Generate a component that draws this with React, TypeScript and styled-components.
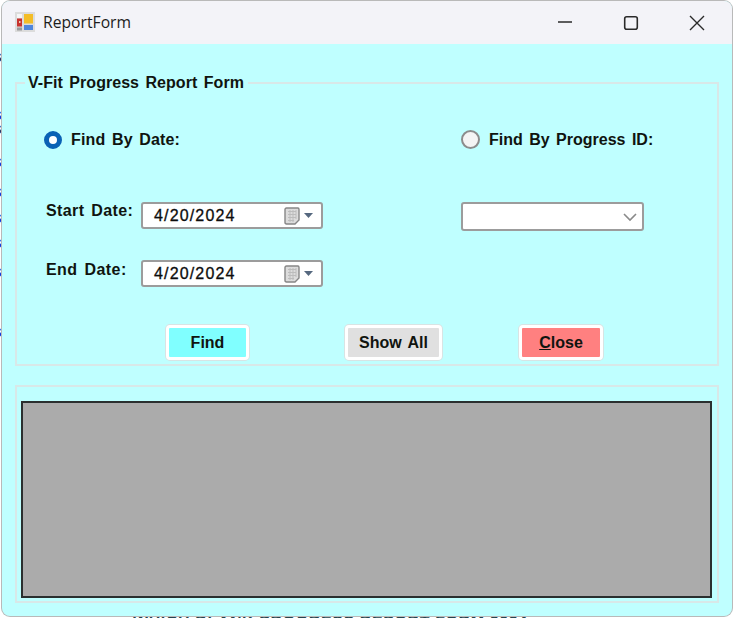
import React from "react";
import styled, { createGlobalStyle } from "styled-components";

const Global = createGlobalStyle`
  html, body { margin: 0; padding: 0; background: #fff; }
  body { font-family: "Liberation Sans", Arial, sans-serif; }
  * { box-sizing: border-box; }
`;

const Desktop = styled.div`
  position: relative;
  width: 733px;
  height: 618px;
  overflow: hidden;
  padding: 1px 1px 0 2px;
  background: #fff;
`;

const PeekText = styled.div`
  position: absolute;
  left: 133px;
  top: 614px;
  font-size: 16px;
  font-weight: 700;
  letter-spacing: 0.6px;
  color: #26434d;
  white-space: nowrap;
`;

const EdgeLetter = styled.span<{ $top: number; $blue?: boolean }>`
  position: absolute;
  left: -7px;
  top: ${(p) => p.$top}px;
  font-size: 13px;
  font-weight: 700;
  color: ${(p) => (p.$blue ? "#1a2fd0" : "#333")};
`;

const Window = styled.div`
  position: relative;
  height: 615px;
  display: flex;
  flex-direction: column;
  border-radius: 8px;
  overflow: hidden;
  background: #bfffff;
  box-shadow: 0 0 0 1px #b9b9b9;
`;

const TitleBar = styled.div`
  height: 43px;
  flex: none;
  display: flex;
  align-items: center;
  padding-left: 13px;
  background: #f3f3f8;
`;

const IconSlot = styled.span`
  display: flex;
  margin-top: -2px;
`;

const TitleText = styled.span`
  margin: -2px 0 0 8px;
  font: 400 15.7px "Open Sans", "Liberation Sans", sans-serif;
  color: #1c1c1c;
`;

const WindowControls = styled.div`
  margin-left: auto;
  display: flex;
  align-items: center;
  gap: 50px;
  padding-right: 27px;
  color: #2a2a2a;
`;

const Client = styled.div`
  flex: 1;
  display: flex;
  flex-direction: column;
  padding: 38px 13px 0 13px;
`;

const Group = styled.div`
  position: relative;
  flex: none;
  border: 2px solid #d8e8e8;
`;

const FormGroup = styled(Group)`
  height: 284px;
  padding: 0 27px;
`;

const GridGroup = styled(Group)`
  margin-top: 19px;
  height: 218px;
  padding: 14px 5px 0 4px;
`;

const Legend = styled.span`
  position: absolute;
  left: 8px;
  top: -10px;
  padding: 0 4px 0 3px;
  background: #bfffff;
`;

const Label = styled.span<{ $spacing?: number }>`
  font-size: 16px;
  font-weight: 700;
  letter-spacing: ${(p) => p.$spacing ?? 0}px;
  word-spacing: 2px;
  color: #10140f;
  white-space: nowrap;
`;

const Columns = styled.div`
  display: grid;
  grid-template-columns: 417px 1fr;
`;

const RadioRow = styled(Columns)`
  padding-top: 46px;
  height: 92px;
`;

const RadioOption = styled.div`
  display: flex;
  align-items: center;
  height: 19px;
  gap: 9px;
`;

const RadioMark = styled.span<{ $checked?: boolean }>`
  width: ${(p) => (p.$checked ? 18 : 19)}px;
  height: ${(p) => (p.$checked ? 18 : 19)}px;
  flex: none;
  border-radius: 50%;
  background: ${(p) => (p.$checked ? "#fff" : "#f4f4f4")};
  border: ${(p) => (p.$checked ? "5px solid #0a62b5" : "2px solid #8c8c8c")};
`;

const DateArea = styled(Columns)`
  padding-top: 26px;
`;

const DateColumn = styled.div`
  display: flex;
  flex-direction: column;
  gap: 31px;
`;

const DateRow = styled.div`
  display: flex;
  align-items: flex-start;
`;

const DateLabel = styled.div<{ $dy: number }>`
  width: 95px;
  margin-left: 2px;
  margin-top: ${(p) => p.$dy}px;
  margin-bottom: ${(p) => -p.$dy}px;
  line-height: 18px;
`;

const Field = styled.div`
  width: 182px;
  height: 27px;
  display: flex;
  align-items: center;
  background: #fff;
  border: 2px solid #9c9c9c;
  border-radius: 3px;
`;

const DateField = styled(Field)`
  padding: 0 8px 0 11px;
  justify-content: space-between;
`;

const ComboField = styled(Field)`
  width: 183px;
  height: 29px;
  justify-content: flex-end;
  padding-right: 4px;
`;

const DateValue = styled.span`
  font-size: 16px;
  font-weight: 400;
  letter-spacing: 1.15px;
  color: #0c0c0c;
  -webkit-text-stroke: 0.3px #0c0c0c;
`;

const CalendarGroup = styled.span`
  display: inline-flex;
  align-items: center;
  gap: 4px;
`;

const ButtonRow = styled.div`
  position: absolute;
  left: 149px;
  top: 241px;
  display: flex;
`;

const ActionButton = styled.button<{ $bg: string; $w: number; $ml: number }>`
  width: ${(p) => p.$w}px;
  margin-left: ${(p) => p.$ml}px;
  height: 35px;
  padding: 0;
  background: ${(p) => p.$bg};
  border: 3px solid #fff;
  border-radius: 4px;
  box-shadow: 0 0 0 1px #d8e4e4;
  font: 700 16px "Liberation Sans", sans-serif;
  word-spacing: 2px;
  color: #10140f;
`;

const Underlined = styled.span`
  text-decoration: underline;
`;

const DataGrid = styled.div`
  height: 197px;
  background: #ababab;
  border: 2px solid #2a2f2f;
`;

function AppIcon() {
  return (
    <svg width="20" height="20" viewBox="0 0 20 20">
      <rect x="0" y="0" width="20" height="20" fill="#dcdcdc" />
      <rect x="2" y="2" width="5" height="4" fill="#f6f6f6" />
      <rect x="2" y="6.5" width="5" height="8" fill="#c8322e" />
      <rect x="4" y="9" width="1.5" height="2" fill="#f0c9b0" />
      <rect x="2" y="15.5" width="5" height="3" fill="#9a9a9a" />
      <rect x="9" y="2" width="9" height="9.5" fill="#f3bd27" />
      <rect x="9" y="13" width="9" height="5" fill="#4f86dc" />
    </svg>
  );
}

function CalendarIcon() {
  return (
    <CalendarGroup>
      <svg width="16" height="18" viewBox="0 0 16 18">
        <path d="M1 2.5 Q1 1 2.5 1 H14 Q15 1 15 2.5 V13 L11 17 H2.5 Q1 17 1 15.5 Z" fill="#dcdcdc" stroke="#868686" strokeWidth="1.4" />
        <path d="M4 4.5H12M4 7.5H12M4 10.5H12M4 13.5H10M6 3V15M9 3V15M12 3V12" stroke="#bcbcbc" strokeWidth="1" />
      </svg>
      <svg width="9" height="5" viewBox="0 0 9 5">
        <path d="M0 0H9L4.5 5Z" fill="#56687f" />
      </svg>
    </CalendarGroup>
  );
}

function DatePicker() {
  return (
    <DateField>
      <DateValue>4/20/2024</DateValue>
      <CalendarIcon />
    </DateField>
  );
}

const edgeLetters = [
  { top: 50 }, { top: 108, blue: true }, { top: 122 }, { top: 155, blue: true },
  { top: 185, blue: true }, { top: 211, blue: true }, { top: 236, blue: true },
  { top: 265, blue: true }, { top: 325, blue: true },
];

export default function App() {
  return (
    <>
      <Global />
      <Desktop>
        <PeekText>WHICH BLANK PROGRESS REPORT FORM 2024</PeekText>
        {edgeLetters.map((e) => (
          <EdgeLetter key={e.top} $top={e.top} $blue={e.blue}>S</EdgeLetter>
        ))}
        <Window>
          <TitleBar>
            <IconSlot><AppIcon /></IconSlot>
            <TitleText>ReportForm</TitleText>
            <WindowControls>
              <svg width="16" height="16" viewBox="0 0 16 16"><path d="M1 7H15" stroke="currentColor" strokeWidth="1.4" /></svg>
              <svg width="16" height="16" viewBox="0 0 16 16"><rect x="1.7" y="1.7" width="12.6" height="12.6" rx="2" fill="none" stroke="currentColor" strokeWidth="1.6" /></svg>
              <svg width="16" height="16" viewBox="0 0 16 16"><path d="M1 1L15 15M15 1L1 15" stroke="currentColor" strokeWidth="1.4" /></svg>
            </WindowControls>
          </TitleBar>
          <Client>
            <FormGroup>
              <Legend><Label $spacing={0.04}>V-Fit Progress Report Form</Label></Legend>
              <RadioRow>
                <RadioOption>
                  <RadioMark $checked />
                  <Label $spacing={0.15}>Find By Date:</Label>
                </RadioOption>
                <RadioOption>
                  <RadioMark />
                  <Label>Find By Progress ID:</Label>
                </RadioOption>
              </RadioRow>
              <DateArea>
                <DateColumn>
                  <DateRow>
                    <DateLabel $dy={0}><Label $spacing={0.4}>Start Date:</Label></DateLabel>
                    <DatePicker />
                  </DateRow>
                  <DateRow>
                    <DateLabel $dy={1}><Label $spacing={0.45}>End Date:</Label></DateLabel>
                    <DatePicker />
                  </DateRow>
                </DateColumn>
                <div>
                  <ComboField>
                    <svg width="16" height="10" viewBox="0 0 16 10"><path d="M2 2L8 8L14 2" fill="none" stroke="#8a8a8a" strokeWidth="1.6" /></svg>
                  </ComboField>
                </div>
              </DateArea>
              <ButtonRow>
                <ActionButton $bg="#80ffff" $w={83} $ml={0}>Find</ActionButton>
                <ActionButton $bg="#e0e0e0" $w={97} $ml={96}>Show All</ActionButton>
                <ActionButton $bg="#ff8080" $w={84} $ml={77}><Underlined>C</Underlined>lose</ActionButton>
              </ButtonRow>
            </FormGroup>
            <GridGroup>
              <DataGrid />
            </GridGroup>
          </Client>
        </Window>
      </Desktop>
    </>
  );
}
